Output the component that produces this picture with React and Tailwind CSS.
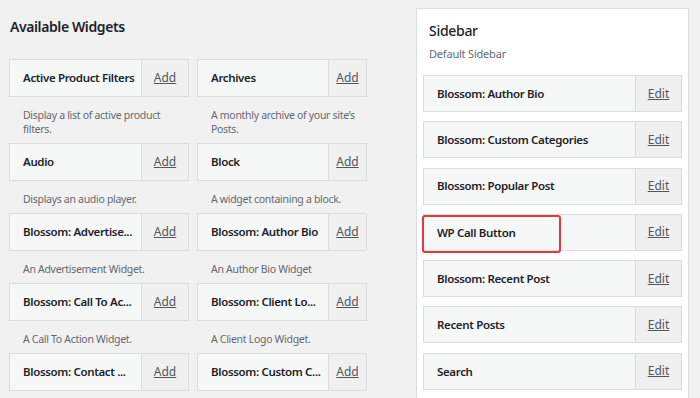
import React from "react";

const left = [
  [
    { t: "Active Product Filters", d: "Display a list of active product filters." },
    { t: "Archives", d: "A monthly archive of your site’s Posts." },
  ],
  [
    { t: "Audio", d: "Displays an audio player." },
    { t: "Block", d: "A widget containing a block." },
  ],
  [
    { t: "Blossom: Advertise...", d: "An Advertisement Widget." },
    { t: "Blossom: Author Bio", d: "An Author Bio Widget" },
  ],
  [
    { t: "Blossom: Call To Ac...", d: "A Call To Action Widget." },
    { t: "Blossom: Client Lo...", d: "A Client Logo Widget." },
  ],
  [
    { t: "Blossom: Contact ...", d: "" },
    { t: "Blossom: Custom C...", d: "" },
  ],
];

const right = [
  "Blossom: Author Bio",
  "Blossom: Custom Categories",
  "Blossom: Popular Post",
  "WP Call Button",
  "Blossom: Recent Post",
  "Recent Posts",
  "Search",
];

function Widget({ t, d, addW }) {
  return (
    <div className="flex flex-col">
      <div className="flex h-[38px] border border-[#dcdcde] bg-[#f6f7f7]">
        <div className="flex min-w-0 flex-1 items-center overflow-hidden pl-[13px] text-[11.5px] font-semibold tracking-[-0.35px] text-[#1d2327] whitespace-nowrap">
          {t}
        </div>
        <div
          className={
            "flex shrink-0 items-center justify-center border-l border-[#dcdcde] bg-[#f0f0f1] text-[12px] text-[#50575e] underline " +
            addW
          }
        >
          Add
        </div>
      </div>
      {d ? (
        <div className="mt-[11px] mb-[7px] pl-[14px] pr-[8px] text-[10.5px] leading-[14px] tracking-[-0.3px] text-[#646970]">
          {d}
        </div>
      ) : null}
    </div>
  );
}

export default function App() {
  return (
    <div
      className="flex h-[398px] w-[700px] overflow-hidden bg-[#f1f1f1]"
      style={{ fontFamily: '"Noto Sans", "Open Sans", sans-serif' }}
    >
      <div className="w-[416px] shrink-0 pl-[9px]">
        <div className="pt-[16px] pl-[1px] text-[14px] font-semibold leading-[22px] tracking-[-0.4px] text-[#1d2327]">
          Available Widgets
        </div>
        <div className="mt-[21px] grid grid-cols-[180px_170px] gap-x-[8px]">
          {left.map((row, i) => (
            <React.Fragment key={i}>
              <Widget {...row[0]} addW="w-[47px]" />
              <Widget {...row[1]} addW="w-[38px]" />
            </React.Fragment>
          ))}
        </div>
      </div>
      <div className="mt-[8px] h-[420px] w-[273px] shrink-0 border border-[#dcdcde] bg-white px-[6px]">
        <div className="pt-[11px] pl-[6px] text-[14px] font-medium leading-[22px] tracking-[-0.3px] text-[#1d2327]">
          Sidebar
        </div>
        <div className="mt-[1px] pl-[6px] text-[11px] leading-[22px] tracking-[-0.2px] text-[#646970]">
          Default Sidebar
        </div>
        <div className="mt-[10px] flex flex-col gap-[9.3px]">
          {right.map((t) => (
            <div key={t} className="relative flex h-[37px] border border-[#dcdcde] bg-[#f6f7f7]">
              <div className="flex min-w-0 flex-1 items-center pl-[13px] text-[11.5px] font-semibold tracking-[-0.35px] text-[#1d2327] whitespace-nowrap">
                {t}
              </div>
              <div className="flex w-[46px] shrink-0 items-center justify-center border-l border-[#dcdcde] bg-[#f0f0f1] text-[12px] text-[#50575e] underline">
                Edit
              </div>
              {t === "WP Call Button" ? (
                <div className="absolute left-[-2px] top-[0px] h-[38px] w-[139px] rounded-[3px] border-2 border-[#e5383b]" />
              ) : null}
            </div>
          ))}
        </div>
      </div>
    </div>
  );
}
